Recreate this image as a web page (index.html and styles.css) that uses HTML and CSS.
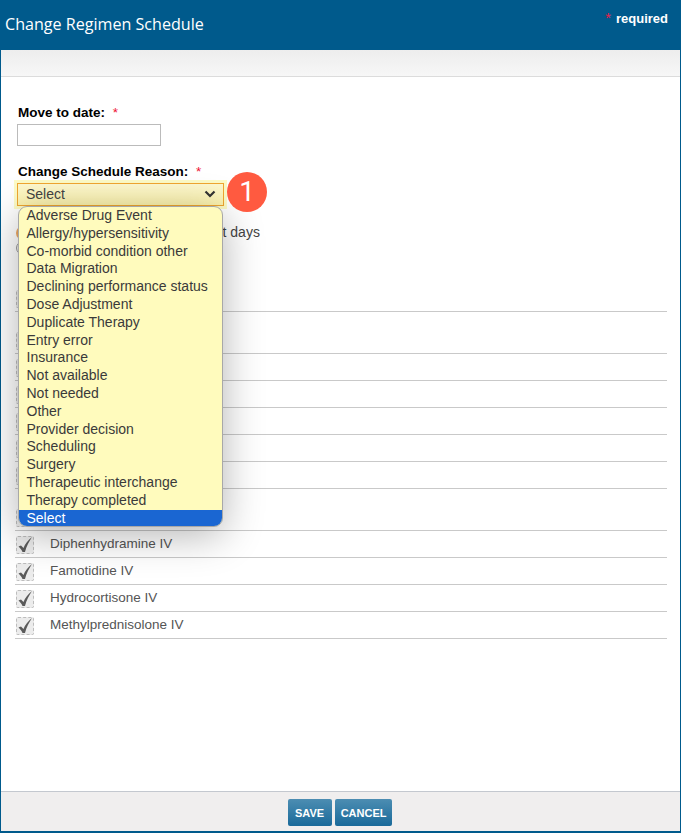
FILE: index.html
```html
<!DOCTYPE html>
<html lang="en">
<head>
<meta charset="utf-8">
<title>Change Regimen Schedule</title>
<link rel="stylesheet" href="styles.css">
</head>
<body>
<div class="dialog">
  <header class="head">
    <h1 class="title">Change Regimen Schedule</h1>
    <div class="req"><span class="star">*</span><span class="req-text">required</span></div>
  </header>
  <div class="subbar"></div>
  <main class="content">
    <div class="field">
      <label class="lab">Move to date: <span class="star">*</span></label>
      <input class="date" type="text">
    </div>
    <div class="field reason">
      <label class="lab">Change Schedule Reason: <span class="star">*</span></label>
      <div class="select-wrap">
        <div class="select">
          <span>Select</span>
          <svg class="chev" width="12" height="8" viewBox="0 0 12 8"><path d="M1.500 1.500 6 6l4.500-4.500" fill="none" stroke="#333" stroke-width="2.200"/></svg>
        </div>
        <div class="badge">1</div>
        <ul class="menu">
          <li>Adverse Drug Event</li>
          <li>Allergy/hypersensitivity</li>
          <li>Co-morbid condition other</li>
          <li>Data Migration</li>
          <li>Declining performance status</li>
          <li>Dose Adjustment</li>
          <li>Duplicate Therapy</li>
          <li>Entry error</li>
          <li>Insurance</li>
          <li>Not available</li>
          <li>Not needed</li>
          <li>Other</li>
          <li>Provider decision</li>
          <li>Scheduling</li>
          <li>Surgery</li>
          <li>Therapeutic interchange</li>
          <li>Therapy completed</li>
          <li class="sel">Select</li>
        </ul>
      </div>
    </div>
    <div class="radios">
      <div class="radio-row"><span class="radio on"></span><span class="radio-text">Move all subsequent treatment days</span></div>
      <div class="radio-row"><span class="radio"></span></div>
    </div>
    <div class="rows">
      <div class="row tall"><span class="box"><svg class="check" viewBox="0 0 18 18" width="18" height="18"><path class="tick" d="M2.500 10.500 5 9.500 7.500 12C9 8 12 4 16 1 13 5.500 10.500 10 9 16H6.500C5.500 13.500 4.200 12 2.500 10.500Z"/></svg></span></div>
      <div class="row tall"><span class="box"><svg class="check" viewBox="0 0 18 18" width="18" height="18"><path class="tick" d="M2.500 10.500 5 9.500 7.500 12C9 8 12 4 16 1 13 5.500 10.500 10 9 16H6.500C5.500 13.500 4.200 12 2.500 10.500Z"/></svg></span></div>
      <div class="row"><span class="box"><svg class="check" viewBox="0 0 18 18" width="18" height="18"><path class="tick" d="M2.500 10.500 5 9.500 7.500 12C9 8 12 4 16 1 13 5.500 10.500 10 9 16H6.500C5.500 13.500 4.200 12 2.500 10.500Z"/></svg></span></div>
      <div class="row"><span class="box"><svg class="check" viewBox="0 0 18 18" width="18" height="18"><path class="tick" d="M2.500 10.500 5 9.500 7.500 12C9 8 12 4 16 1 13 5.500 10.500 10 9 16H6.500C5.500 13.500 4.200 12 2.500 10.500Z"/></svg></span></div>
      <div class="row"><span class="box"><svg class="check" viewBox="0 0 18 18" width="18" height="18"><path class="tick" d="M2.500 10.500 5 9.500 7.500 12C9 8 12 4 16 1 13 5.500 10.500 10 9 16H6.500C5.500 13.500 4.200 12 2.500 10.500Z"/></svg></span></div>
      <div class="row"><span class="box"><svg class="check" viewBox="0 0 18 18" width="18" height="18"><path class="tick" d="M2.500 10.500 5 9.500 7.500 12C9 8 12 4 16 1 13 5.500 10.500 10 9 16H6.500C5.500 13.500 4.200 12 2.500 10.500Z"/></svg></span></div>
      <div class="row"><span class="box"><svg class="check" viewBox="0 0 18 18" width="18" height="18"><path class="tick" d="M2.500 10.500 5 9.500 7.500 12C9 8 12 4 16 1 13 5.500 10.500 10 9 16H6.500C5.500 13.500 4.200 12 2.500 10.500Z"/></svg></span></div>
      <div class="row tall"><span class="box"><svg class="check" viewBox="0 0 18 18" width="18" height="18"><path class="tick" d="M2.500 10.500 5 9.500 7.500 12C9 8 12 4 16 1 13 5.500 10.500 10 9 16H6.500C5.500 13.500 4.200 12 2.500 10.500Z"/></svg></span></div>
      <div class="row"><span class="box"><svg class="check" viewBox="0 0 18 18" width="18" height="18"><path class="tick" d="M2.500 10.500 5 9.500 7.500 12C9 8 12 4 16 1 13 5.500 10.500 10 9 16H6.500C5.500 13.500 4.200 12 2.500 10.500Z"/></svg></span><span class="drug">Diphenhydramine IV</span></div>
      <div class="row"><span class="box"><svg class="check" viewBox="0 0 18 18" width="18" height="18"><path class="tick" d="M2.500 10.500 5 9.500 7.500 12C9 8 12 4 16 1 13 5.500 10.500 10 9 16H6.500C5.500 13.500 4.200 12 2.500 10.500Z"/></svg></span><span class="drug">Famotidine IV</span></div>
      <div class="row"><span class="box"><svg class="check" viewBox="0 0 18 18" width="18" height="18"><path class="tick" d="M2.500 10.500 5 9.500 7.500 12C9 8 12 4 16 1 13 5.500 10.500 10 9 16H6.500C5.500 13.500 4.200 12 2.500 10.500Z"/></svg></span><span class="drug">Hydrocortisone IV</span></div>
      <div class="row"><span class="box"><svg class="check" viewBox="0 0 18 18" width="18" height="18"><path class="tick" d="M2.500 10.500 5 9.500 7.500 12C9 8 12 4 16 1 13 5.500 10.500 10 9 16H6.500C5.500 13.500 4.200 12 2.500 10.500Z"/></svg></span><span class="drug">Methylprednisolone IV</span></div>
    </div>
  </main>
  <footer class="foot">
    <button class="btn btn-save" type="button">SAVE</button>
    <button class="btn" type="button">CANCEL</button>
  </footer>
</div>
</body>
</html>
```
FILE: styles.css
```css
* { box-sizing: border-box; }
html, body { margin: 0; height: 100%; overflow: hidden; }
body { font-family: "Liberation Sans", Arial, sans-serif; font-size: 14px; color: #444; background: #fff; }
.dialog { height: 833px; display: flex; flex-direction: column; border: 1px solid #005a8c; border-width: 0 1px 2px 1px; }
.head { height: 50px; margin: 0 -1px; background: #005a8c; color: #fff; display: flex; justify-content: space-between; flex: none; }
.title { margin: 0; padding: 13px 0 0 5px; font-family: "Open Sans", sans-serif; font-size: 16.100px; line-height: 22px; font-weight: 400; }
.req { display: flex; gap: 5px; padding: 11px 13px 0 0; font-size: 13px; font-weight: 700; line-height: 16px; }
.star { color: #ee1133; font-weight: 400; }
.req .star { font-size: 15px; line-height: 14px; color: #e8204a; }
.subbar { height: 27px; flex: none; background: linear-gradient(#ededed, #f7f7f7); border-bottom: 1px solid #dcdcdc; }
.content { flex: 1; padding: 28px 13px 0 14px; }
.field { padding-left: 2px; }
.lab { display: block; padding-left: 1px; font-size: 13.500px; font-weight: 700; color: #000; line-height: 16px; }
.lab .star { margin-left: 4px; }
.date { display: block; width: 144px; height: 22px; margin-top: 3px; border: 1px solid #bbb; background: #fff; padding: 0; }
.reason { margin-top: 18px; }
.select-wrap { position: relative; margin-top: 3px; width: 207px; }
.select { height: 23px; padding: 0 7px 2px 8px; display: flex; justify-content: space-between; align-items: center; border: 1px solid #f0a630; background: linear-gradient(#fdf8cf, #fdf4ae); box-shadow: 0 0 0 3px #fdfbc6; color: #444; }
.chev { display: block; }
.badge { position: absolute; left: 210px; top: -11px; width: 40px; height: 40px; border-radius: 50%; background: #ff5a40; color: #fff; font-family: Roboto, sans-serif; font-size: 28px; line-height: 40px; text-align: center; z-index: 3; }
.menu { position: absolute; left: 1px; top: 23px; width: 205px; height: 321px; margin: 0; padding: 0; list-style: none; background: #fffbbd; border: 1px solid #a8a8a8; border-radius: 9px; overflow: hidden; box-shadow: 0 8px 40px rgba(0,0,0,.3); z-index: 2; color: #3a3a3a; }
.menu li { height: 17.800px; line-height: 17.800px; padding-left: 7.500px; white-space: nowrap; }
.menu .sel { background: #1a66d2; color: #fff; }
.radios { margin-top: 19px; }
.radio-row { height: 15px; display: flex; align-items: center; gap: 6px; padding-left: 1px; line-height: 15px; }
.radio-text { position: relative; z-index: 1; margin-left: -1px; }
.radio { width: 14px; height: 14px; flex: none; border-radius: 50%; border: 1px solid #999; background: #f4f4f4; }
.radio.on { border: 2px solid #eda860; background: #fbe6c8; }
.rows { margin-top: 15px; }
.row { height: 27px; display: flex; align-items: flex-start; padding-top: 5px; border-bottom: 1px solid #c9c9c9; }
.row.tall { height: 42px; padding-top: 20px; }
.box { width: 18px; height: 18px; margin-left: 1px; flex: none; display: flex; align-items: center; justify-content: center; border: 1px dashed #bdbdbd; border-radius: 2px; background: #ececec; }
.check { display: block; flex: none; }
.tick { fill: #5a5a5a; }
.drug { margin-left: 16px; font-size: 13.500px; color: #555; line-height: 15px; }
.foot { height: 40px; flex: none; display: flex; justify-content: center; align-items: flex-start; gap: 3px; padding-top: 7px; padding-right: 1px; background: #f0eeee; border-top: 1px solid #c4c8cf; }
.btn { height: 27px; padding: 0 6px; border: 0; border-radius: 2px; background: linear-gradient(#4c8db2, #1a6a9a); color: #fff; font: 700 11px "Liberation Sans", Arial, sans-serif; }
.btn-save { padding: 0 7.500px; }
```
